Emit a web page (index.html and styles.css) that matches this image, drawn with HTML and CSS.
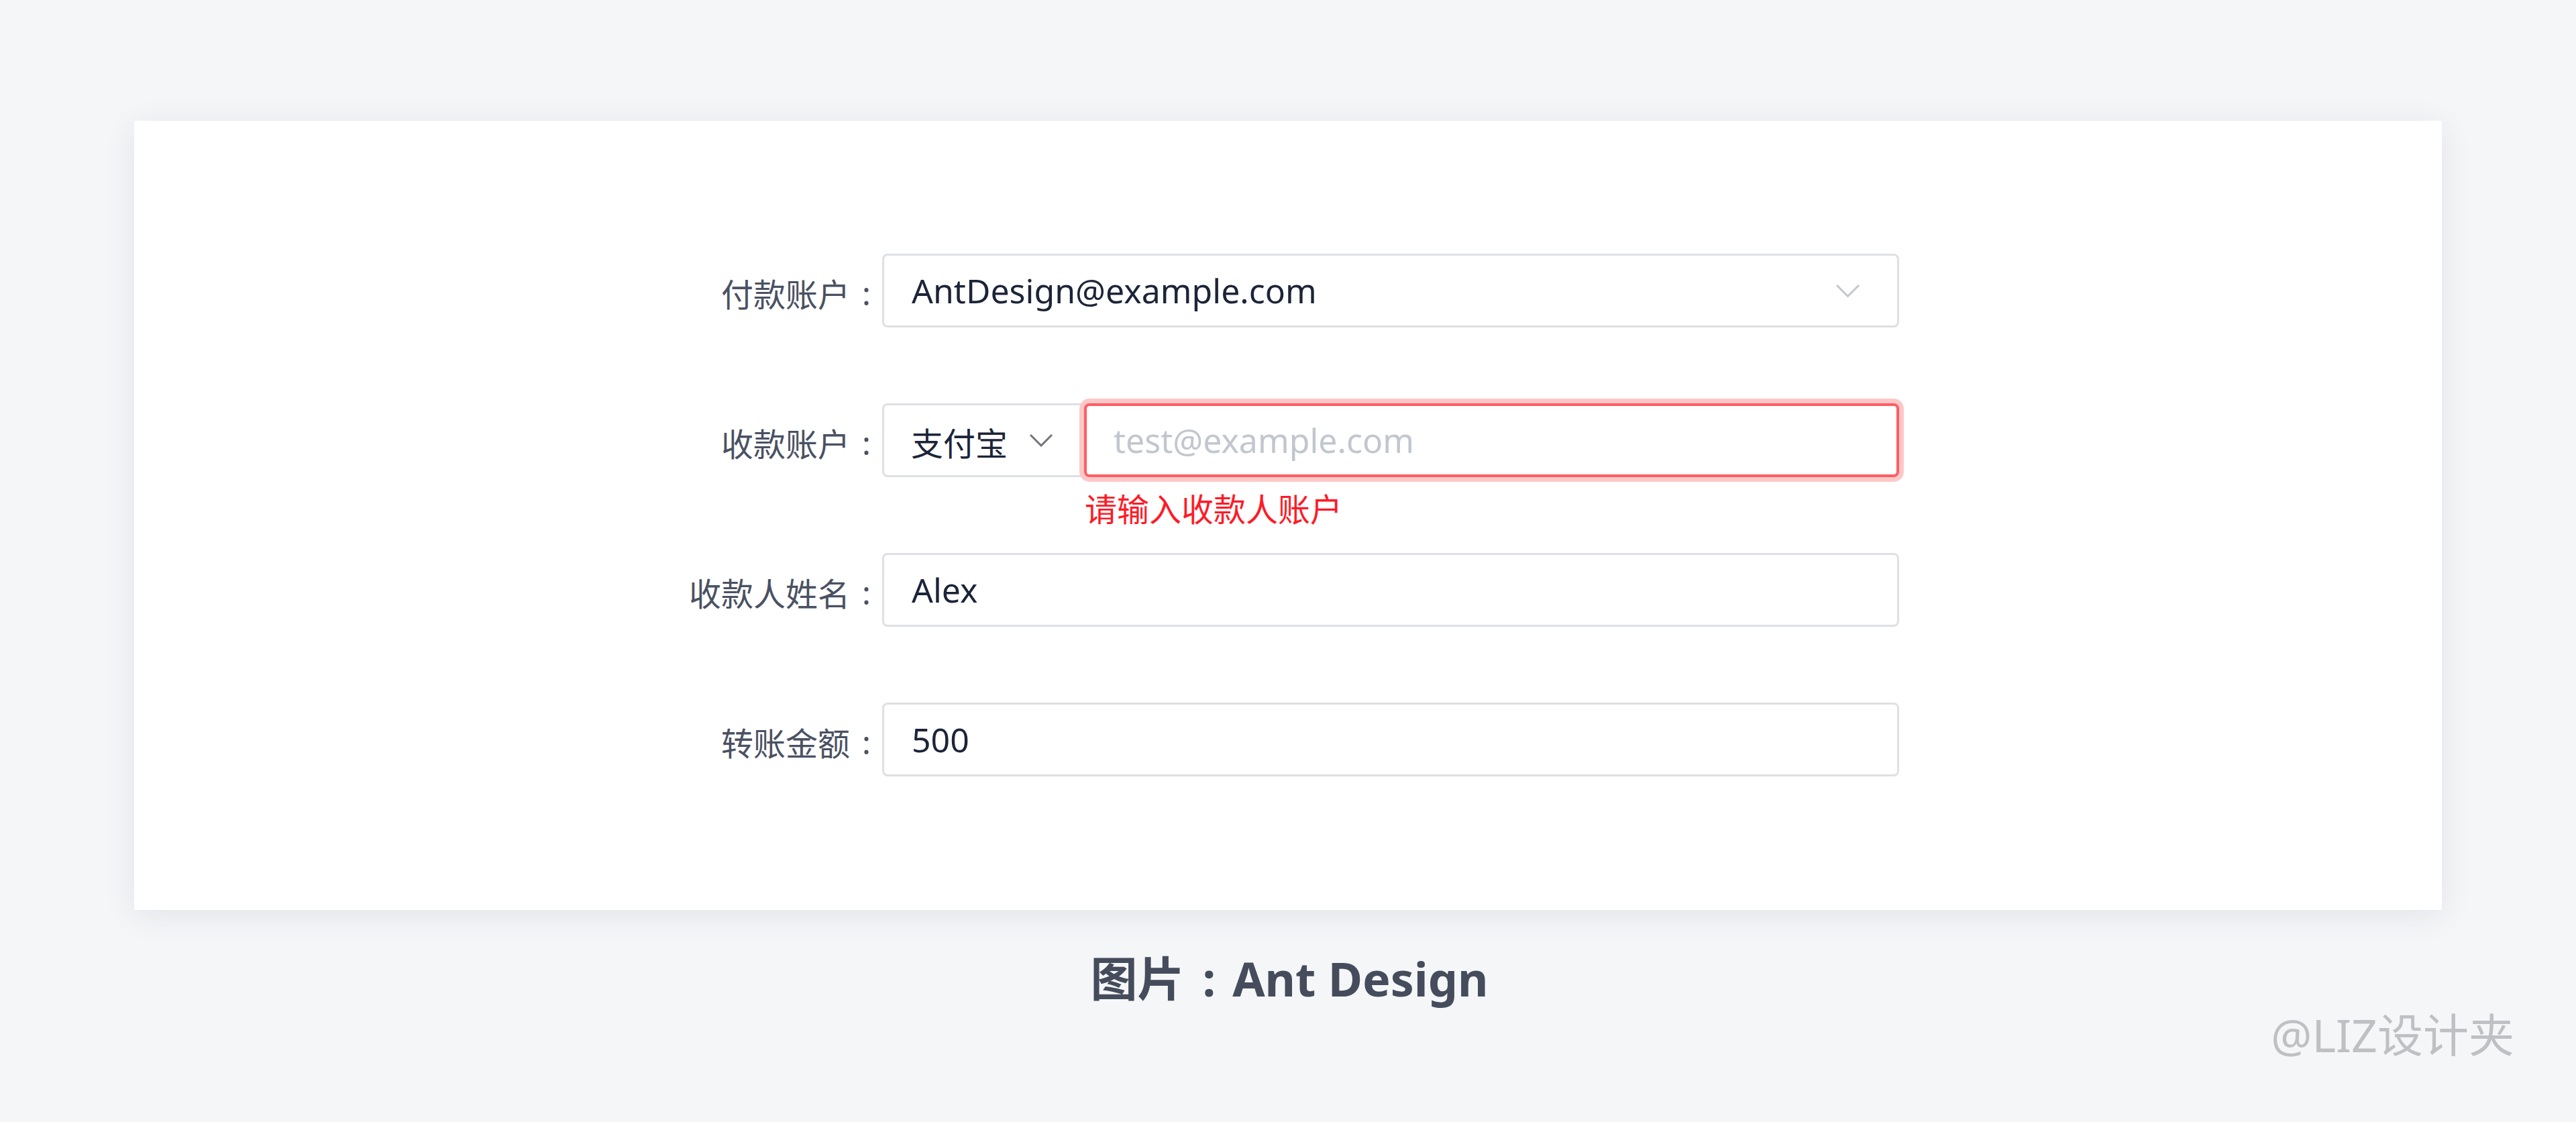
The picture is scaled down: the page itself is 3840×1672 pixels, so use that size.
FILE: index.html
```html
<!DOCTYPE html>
<html lang="zh-CN">
<head>
<meta charset="utf-8">
<title>Ant Design 表单</title>
<link rel="stylesheet" href="styles.css">
</head>
<body>
<div class="page">
  <div class="card">
    <form class="form">
      <div class="item">
        <div class="label"><span>付款账户</span><span class="colon">:</span></div>
        <div class="control">
          <div class="field select-field">
            <span class="value">AntDesign@example.com</span>
            <svg class="arrow arrow-light" viewBox="0 0 37 21" width="37" height="21"><polyline points="2,2 18.5,18.5 35,2" fill="none" stroke="currentColor" stroke-width="3"/></svg>
          </div>
        </div>
      </div>
      <div class="item has-error">
        <div class="label"><span>收款账户</span><span class="colon">:</span></div>
        <div class="control">
          <div class="group">
            <div class="field addon-select">
              <span class="value">支付宝</span>
              <svg class="arrow arrow-dark" viewBox="0 0 36 20" width="36" height="20"><polyline points="2,2 18,18 34,2" fill="none" stroke="currentColor" stroke-width="3"/></svg>
            </div>
            <input class="field input error-input" type="text" placeholder="test@example.com">
          </div>
          <div class="explain">请输入收款人账户</div>
        </div>
      </div>
      <div class="item">
        <div class="label"><span>收款人姓名</span><span class="colon">:</span></div>
        <div class="control">
          <input class="field input" type="text" value="Alex">
        </div>
      </div>
      <div class="item last">
        <div class="label"><span>转账金额</span><span class="colon">:</span></div>
        <div class="control">
          <input class="field input" type="text" value="500">
        </div>
      </div>
    </form>
  </div>
  <div class="caption">图片<span class="cap-colon">:</span>Ant Design</div>
  <div class="watermark">@LIZ设计夹</div>
</div>
</body>
</html>
```
FILE: styles.css
```css
* {
  box-sizing: border-box;
}

html, body {
  margin: 0;
  padding: 0;
  background: #f5f6f8;
}

body {
  font-family: "Noto Sans", "Noto Sans CJK SC", sans-serif;
  width: 3840px;
  height: 1672px;
  overflow: hidden;
}

.page {
  padding-top: 180px;
}

.card {
  width: 3440px;
  margin: 0 auto;
  background: #ffffff;
  padding: 198px 0 199px;
  box-shadow: 0 8px 44px rgba(30, 40, 70, 0.09);
}

.form {
  margin: 0;
}

.item {
  display: flex;
  align-items: flex-start;
  margin-bottom: 113px;
}

.item.has-error {
  margin-bottom: 33px;
}

.item.last {
  margin-bottom: 0;
}

.label {
  width: 1115px;
  height: 110px;
  display: flex;
  justify-content: flex-end;
  align-items: center;
  font-size: 48px;
  color: #4a5162;
  font-family: "Noto Sans CJK SC", sans-serif;
  padding-top: 6px;
}

.colon {
  width: 48px;
  text-align: center;
  font-family: "Noto Sans", sans-serif;
  padding-left: 1px;
}

.control {
  width: 1516px;
}

.field {
  height: 110px;
  border: 3px solid #dfe0e5;
  border-radius: 8px;
  background: #ffffff;
  font-family: "Noto Sans", "Noto Sans CJK SC", sans-serif;
  font-size: 50px;
  color: #1c2438;
}

.select-field {
  display: flex;
  align-items: center;
  justify-content: space-between;
  padding: 0 55px 0 41px;
}

.arrow {
  display: block;
  flex: none;
}

.arrow-light {
  color: #c4c6cb;
}

.arrow-dark {
  color: #71757f;
}

.group {
  display: flex;
  gap: 3px;
}

.addon-select {
  width: 298px;
  flex: none;
  display: flex;
  align-items: center;
  gap: 32px;
  padding: 0 0 0 40px;
  border-right: none;
  border-radius: 8px 0 0 8px;
  font-family: "Noto Sans CJK SC", sans-serif;
  font-size: 48px;
}

.addon-select .value {
  padding-top: 4px;
}

.input {
  display: block;
  width: 100%;
  padding: 0 40px 0 41px;
  outline: none;
  margin: 0;
}

.error-input {
  flex: 1;
  width: auto;
  min-width: 0;
  border: 4px solid #ff5c62;
  border-radius: 8px;
  box-shadow: 0 0 0 7px #ffc8c8;
  padding-left: 40px;
}

.input::placeholder {
  color: #c2c6ce;
  opacity: 1;
}

.explain {
  margin-top: 10px;
  height: 70px;
  line-height: 70px;
  padding-left: 302px;
  font-family: "Noto Sans CJK SC", sans-serif;
  font-size: 48px;
  color: #ff1a26;
}

.caption {
  margin-top: 60px;
  text-align: center;
  font-family: "Noto Sans", "Noto Sans CJK SC", sans-serif;
  font-weight: 700;
  font-size: 70px;
  line-height: 84px;
  color: #454c5c;
  padding-left: 4px;
}

.cap-colon {
  padding: 0 25px 0 27px;
}

.watermark {
  margin-top: 1px;
  text-align: right;
  padding-right: 92px;
  font-family: "Noto Sans", "Noto Sans CJK SC", sans-serif;
  font-size: 68px;
  line-height: 82px;
  color: #bfc0c3;
}
```
